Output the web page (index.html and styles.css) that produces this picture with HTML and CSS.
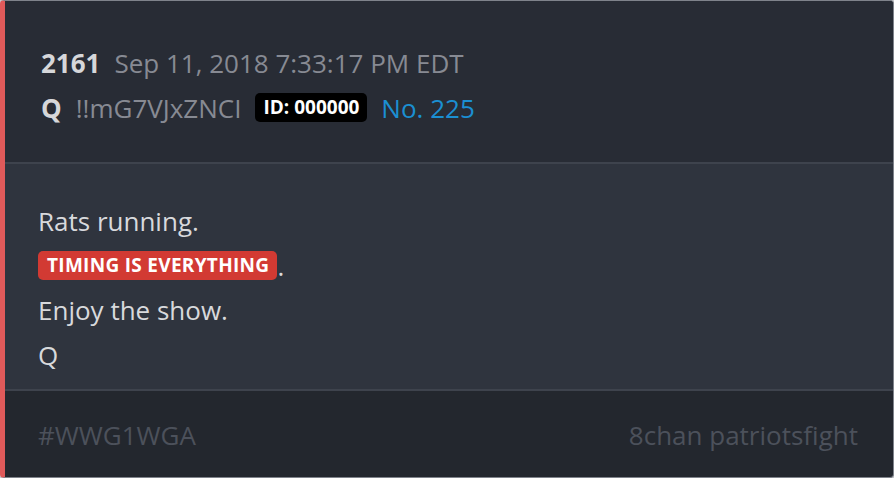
FILE: index.html
```html
<!DOCTYPE html>
<html lang="en">
<head>
    <meta charset="UTF-8">
    <title>Post 2161</title>
    <link rel="stylesheet" href="styles.css">
</head>
<body>
    <div class="post">
        <div class="post-header">
            <div class="meta-line">
                <span class="post-num">2161</span>
                <span class="post-date">Sep 11, 2018 7:33:17 PM EDT</span>
            </div>
            <div class="meta-line">
                <span class="author">Q</span>
                <span class="trip">!!mG7VJxZNCI</span>
                <span class="id-badge">ID: 000000</span>
                <span class="post-no">No. 225</span>
            </div>
        </div>

        <div class="post-body">
            <p>Rats running.</p>
            <p><span class="highlight">TIMING IS EVERYTHING</span>.</p>
            <p>Enjoy the show.</p>
            <p>Q</p>
        </div>

        <div class="post-footer">
            <span>#WWG1WGA</span>
            <span>8chan patriotsfight</span>
        </div>
    </div>
</body>
</html>
```

FILE: styles.css
```css
body {
    margin: 0;
    background-color: #c9cbcf;
    font-family: 'Open Sans', 'Noto Sans', sans-serif;
}

.post {
    width: 894px;
    height: 478px;
    box-sizing: border-box;
    display: flex;
    flex-direction: column;
    border: 1px solid #7f838b;
    border-left: 5px solid #e05a5a;
    border-radius: 4px;
    overflow: hidden;
    background-color: #23272e;
}

.post-header {
    height: 163px;
    box-sizing: border-box;
    padding: 39px 0 0 36px;
    background-color: #282c35;
    border-bottom: 2px solid #3e434d;
}

.meta-line {
    display: flex;
    align-items: center;
    height: 45px;
    font-size: 26px;
}

.post-num, .author {
    font-weight: 700;
    color: #d6d7da;
    margin-right: 14px;
}

.post-date, .trip {
    color: #878a93;
}

.trip {
    margin-right: 14px;
}

.id-badge {
    background-color: #000;
    color: #fff;
    font-weight: 700;
    font-size: 19px;
    line-height: 29px;
    padding: 0 8px;
    border-radius: 5px;
    margin-right: 14px;
}

.post-no {
    color: #1b8fd2;
}

.post-body {
    height: 227px;
    box-sizing: border-box;
    padding: 35px 0 0 33px;
    background-color: #2f343e;
    border-bottom: 2px solid #3e434d;
    color: #d8d9dc;
    font-size: 26px;
}

.post-body p {
    margin: 0;
    height: 44.5px;
    display: flex;
    align-items: center;
}

.highlight {
    background-color: #d23a33;
    color: #fff;
    font-weight: 700;
    font-size: 19px;
    letter-spacing: 0.3px;
    line-height: 29px;
    padding: 0 8px 0 9px;
    border-radius: 5px;
}

.post-footer {
    flex: 1;
    display: flex;
    justify-content: space-between;
    align-items: center;
    padding: 2px 35px 0 33px;
    color: #4c515b;
    font-size: 26px;
}
```
